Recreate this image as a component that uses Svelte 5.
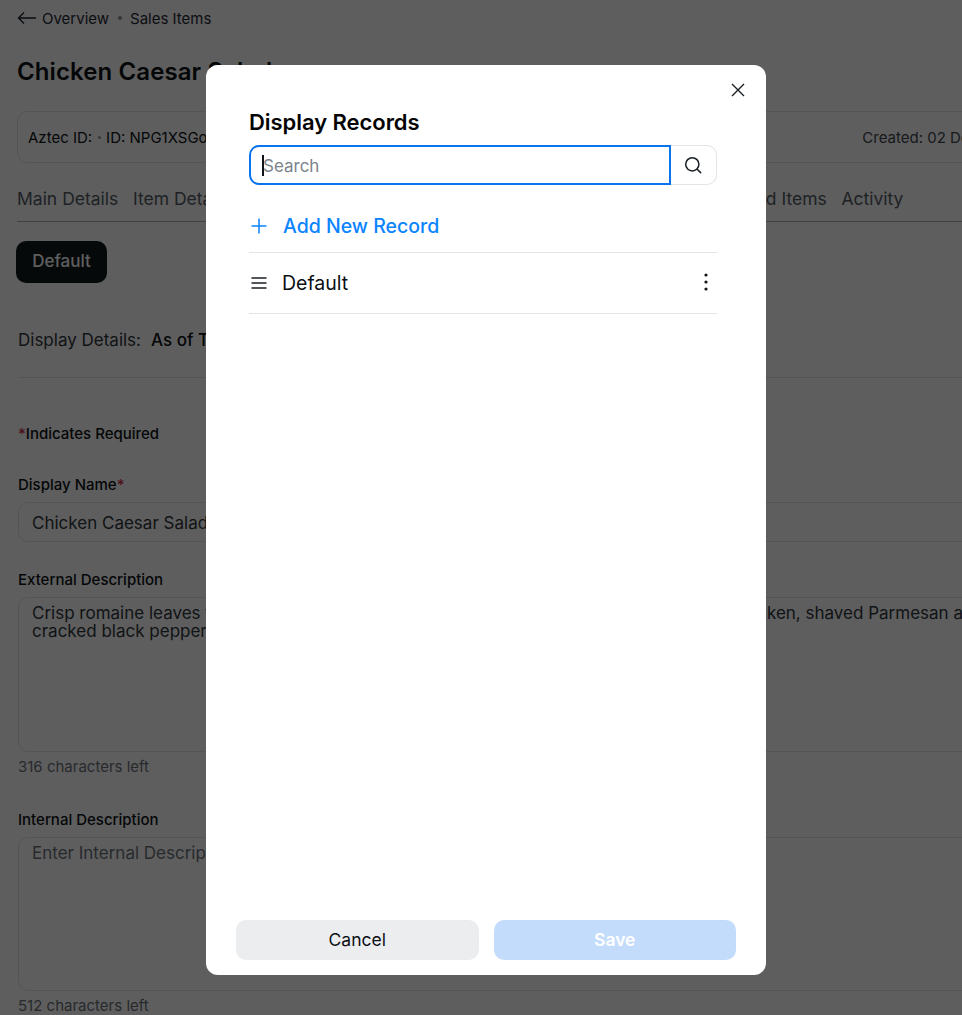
<script>
	let query = $state('');
	const tabs = ['Main Details', 'Item Details', 'Modifier Sets', 'Pricing', 'Availability', 'Nutrition', 'Allergens', 'Linked Items', 'Activity'];
	const records = ['Default'];
</script>

<div class="page">
	<nav class="crumbs">
		<svg width="20" height="14" viewBox="0 0 20 14" fill="none" stroke="#1f2933" stroke-width="1.4">
			<path d="M19 7H1.5M7 1.5 1.5 7 7 12.5" />
		</svg>
		<span>Overview</span>
		<i></i>
		<span>Sales Items</span>
	</nav>

	<h1>Chicken Caesar Salad</h1>

	<div class="info">
		<span>Aztec ID:</span>
		<i></i>
		<span>ID: NPG1XSGo7TQ</span>
		<span class="created">Created: 02 Dec 2024</span>
	</div>

	<div class="tabs">
		{#each tabs as tab}
			<span>{tab}</span>
		{/each}
	</div>

	<div class="pill">Default</div>

	<div class="details">
		<span>Display Details:</span>
		<b>As of Today</b>
	</div>

	<p class="required"><em>*</em>Indicates Required</p>

	<div class="label name">Display Name<em>*</em></div>
	<div class="field single">Chicken Caesar Salad</div>

	<div class="label external">External Description</div>
	<div class="field area">Crisp romaine leaves tossed in our creamy Caesar dressing, topped with freshly grilled chicken, shaved Parmesan and
cracked black pepper.</div>
	<div class="count">316 characters left</div>

	<div class="label internal">Internal Description</div>
	<div class="field area short muted">Enter Internal Description</div>
	<div class="count">512 characters left</div>
</div>

<div class="overlay">
	<div class="modal">
		<button class="close" aria-label="Close">
			<svg width="14" height="14" viewBox="0 0 14 14" fill="none" stroke="#1a1f24" stroke-width="1.4">
				<path d="M1 1l12 12M13 1 1 13" />
			</svg>
		</button>

		<h2>Display Records</h2>

		<div class="search">
			<div class="input">
				<span class="caret"></span>
				<input placeholder="Search" bind:value={query} />
			</div>
			<button class="go" aria-label="Search">
				<svg width="18" height="18" viewBox="0 0 18 18" fill="none" stroke="#1a1f24" stroke-width="1.5">
					<circle cx="8.3" cy="8.3" r="6.6" />
					<path d="M13.2 13.2 16.6 16.6" stroke-linecap="round" />
				</svg>
			</button>
		</div>

		<button class="add">
			<svg width="16" height="16" viewBox="0 0 16 16" fill="none" stroke="#0a84ff" stroke-width="1.5">
				<path d="M8 .5v15M.5 8h15" />
			</svg>
			<span>Add New Record</span>
		</button>

		<ul>
			{#each records as record}
				<li>
					<svg width="16" height="12" viewBox="0 0 16 12" fill="none" stroke="#1a1f24" stroke-width="1.5">
						<path d="M.5 1h15M.5 6h15M.5 11h15" />
					</svg>
					<span>{record}</span>
					<svg class="more" width="4" height="18" viewBox="0 0 4 18" fill="#10151a">
						<circle cx="2" cy="2" r="1.6" />
						<circle cx="2" cy="9" r="1.6" />
						<circle cx="2" cy="16" r="1.6" />
					</svg>
				</li>
			{/each}
		</ul>

		<footer>
			<button class="cancel">Cancel</button>
			<button class="save" disabled>Save</button>
		</footer>
	</div>
</div>

<style>
	:global(html), :global(body) {
		margin: 0;
		height: 100%;
		overflow: hidden;
		background: #fff;
	}

	.page {
		width: 1140px;
		height: 1015px;
		overflow: hidden;
		box-sizing: border-box;
		padding: 0 0 0 18px;
		font-family: Inter, "Noto Sans", sans-serif;
		color: #0d1216;
	}

	.crumbs {
		display: flex;
		align-items: center;
		gap: 5px;
		height: 36px;
		font-size: 15px;
		color: #1f2933;
		margin-left: -1px;

		> i {
			width: 4px;
			height: 4px;
			margin: 0 3px 0 4px;
			border-radius: 50%;
			background: #8b9299;
		}
	}

	h1 {
		margin: 18px 0 0 -1px;
		font-size: 24px;
		line-height: 36px;
		font-weight: 600;
		letter-spacing: 0.1px;
	}

	.info {
		display: flex;
		align-items: center;
		gap: 5.5px;
		box-sizing: border-box;
		height: 52px;
		margin: 21px 0 0 -1px;
		padding: 0 10px;
		border: 1px solid #e2e4e8;
		border-radius: 10px;
		font-size: 15px;

		> i {
			width: 3px;
			height: 3px;
			border-radius: 50%;
			background: #8b9299;
		}

		.created {
			margin-left: 620px;
			color: #3f474f;
		}
	}

	.tabs {
		display: flex;
		gap: 14.6px;
		height: 44px;
		align-items: center;
		box-sizing: border-box;
		margin: 15px 0 0 -1px;
		padding-bottom: 2px;
		border-bottom: 1px solid #aab0b6;
		font-size: 17.5px;
		color: #545c64;
	}

	.pill {
		display: flex;
		align-items: center;
		justify-content: center;
		width: 91px;
		height: 42px;
		box-sizing: border-box;
		padding-bottom: 2px;
		margin: 19px 0 0 -2px;
		border-radius: 10px;
		background: #0f1a1b;
		color: #fff;
		font-size: 17px;
		font-weight: 500;
	}

	.details {
		display: flex;
		align-items: center;
		gap: 10px;
		height: 95px;
		box-sizing: border-box;
		padding-top: 20px;
		border-bottom: 1px solid #e2e4e8;
		font-size: 17px;
		color: #2f363d;

		> b {
			font-weight: 500;
			color: #0d1216;
		}
	}

	.required {
		margin: 46px 0 0;
		font-size: 15px;
		line-height: 20px;
		font-weight: 500;

		> em {
			color: #d0304a;
			font-style: normal;
		}
	}

	.label {
		font-size: 15px;
		line-height: 20px;
		font-weight: 500;

		> em {
			color: #d0304a;
			font-style: normal;
		}

		&.name {
			margin-top: 31px;
		}

		&.external {
			margin-top: 28px;
		}

		&.internal {
			margin-top: 34px;
		}
	}

	.field {
		box-sizing: border-box;
		margin-top: 7px;
		width: 1100px;
		padding: 0 13px;
		border: 1px solid #e2e4e8;
		border-radius: 10px;
		font-size: 17px;
		color: #2f363d;

		&.single {
			height: 40px;
			line-height: 40px;
		}

		&.area {
			height: 155px;
			padding-top: 6px;
			line-height: 18px;
			white-space: pre;
			overflow: hidden;
		}

		&.short {
			height: 154px;
		}

		&.muted {
			color: #6b737b;
		}
	}

	.count {
		margin-top: 6px;
		font-size: 15px;
		line-height: 18px;
		color: #6b737b;
	}

	.overlay {
		position: fixed;
		inset: 0 -10px -25px 0;
		display: flex;
		align-items: center;
		justify-content: center;
		background: rgba(0, 0, 0, 0.63);
		font-family: Inter, "Noto Sans", sans-serif;
	}

	.modal {
		position: relative;
		display: flex;
		flex-direction: column;
		box-sizing: border-box;
		width: 560px;
		height: 910px;
		padding: 43px 49px 15px 43px;
		border-radius: 12px;
		background: #fff;
		color: #0b1014;
	}

	button {
		font: inherit;
		border: 0;
		background: none;
		padding: 0;
		cursor: pointer;
	}

	.close {
		position: absolute;
		top: 18px;
		right: 21px;
		display: flex;
	}

	h2 {
		margin: 0;
		font-size: 22px;
		line-height: 28px;
		font-weight: 600;
		letter-spacing: -0.05px;
		color: #050505;
	}

	.search {
		display: flex;
		height: 40px;
		margin-top: 9px;
	}

	.input {
		position: relative;
		flex: 1;
		display: flex;
		align-items: center;
		box-sizing: border-box;
		padding: 1px 0 0 12px;
		border: 2px solid #0a74f0;
		border-radius: 10px 0 0 10px;

		> input {
			width: 100%;
			border: 0;
			outline: 0;
			padding: 0;
			font: inherit;
			font-size: 17px;
			caret-color: transparent;
		}

		> input::placeholder {
			color: #7b838b;
		}
	}

	.caret {
		position: absolute;
		left: 11px;
		top: 8px;
		width: 2px;
		height: 21px;
		background: #10151a;
	}

	.go {
		display: flex;
		align-items: center;
		justify-content: center;
		width: 46px;
		box-sizing: border-box;
		padding-right: 2px;
		border: 1px solid #e2e4e8;
		border-left: 0;
		border-radius: 0 10px 10px 0;
	}

	.add {
		display: flex;
		align-items: center;
		gap: 16px;
		height: 68px;
		box-sizing: border-box;
		padding: 16px 0 1px 2px;
		border-bottom: 1px solid #e2e4e8;
		color: #0a84ff;
		font-size: 19.5px;
		font-weight: 500;
	}

	ul {
		flex: 1;
		margin: 0;
		padding: 0;
		list-style: none;
	}

	li {
		display: flex;
		align-items: center;
		gap: 15px;
		height: 61px;
		box-sizing: border-box;
		padding-left: 2px;
		padding-right: 9px;
		border-bottom: 1px solid #e2e4e8;
		font-size: 19.5px;

		> .more {
			margin: -2px 0 0 auto;
		}
	}

	footer {
		display: flex;
		gap: 15px;
		margin: 0 -19px 0 -13px;
	}

	footer button {
		flex: 1;
		height: 40px;
		padding-bottom: 1px;
		border-radius: 10px;
		font-size: 17.5px;
	}

	.cancel {
		background: #ecedef;
		color: #0b1014;
	}

	.save {
		background: #c3dcfb;
		color: #fff;
		font-weight: 600;
	}
</style>
